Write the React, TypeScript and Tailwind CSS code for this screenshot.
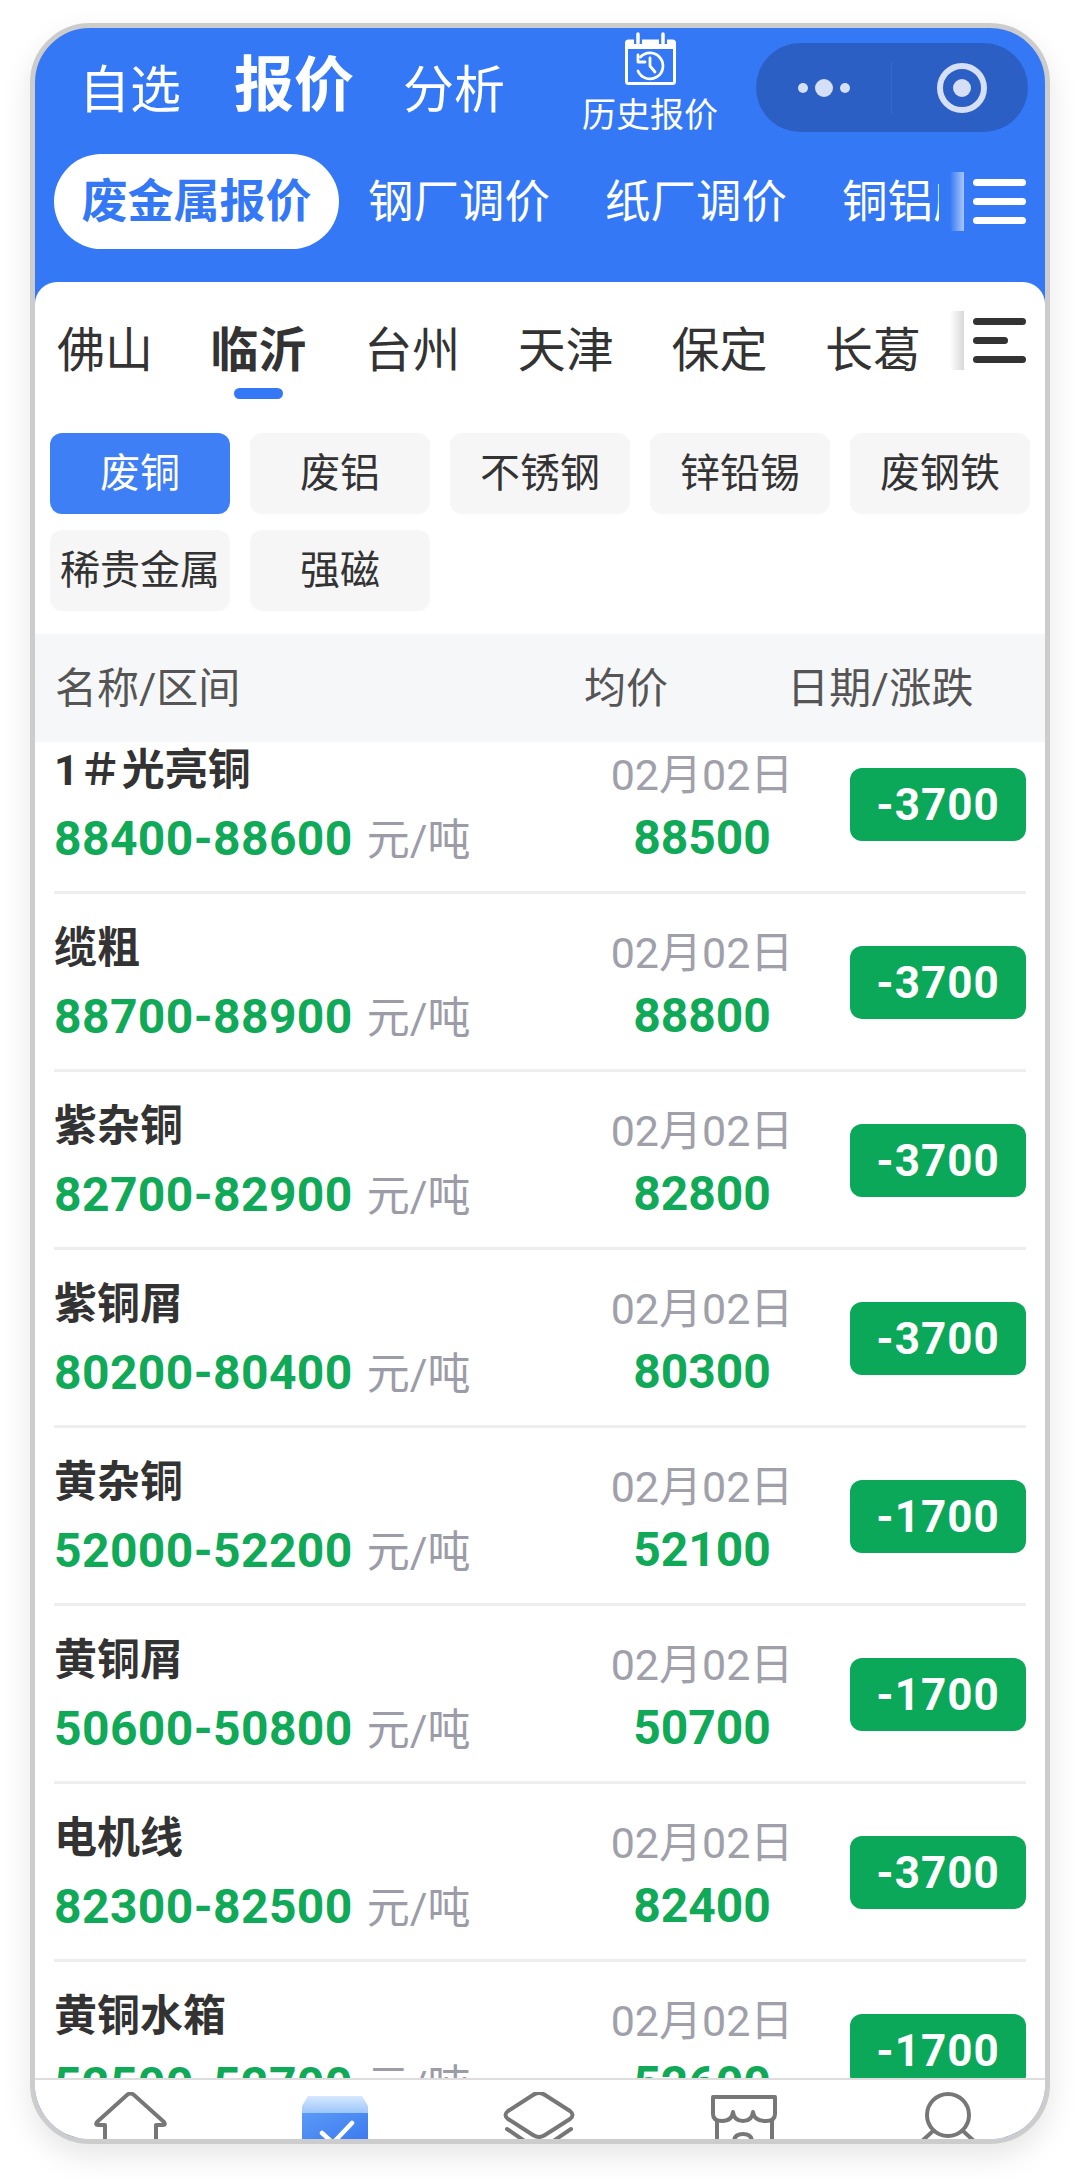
const subTabs = ["钢厂调价", "纸厂调价", "铜铝废料"];
const cities = ["佛山", "临沂", "台州", "天津", "保定", "长葛"];
const chips = ["废铜", "废铝", "不锈钢", "锌铅锡", "废钢铁", "稀贵金属", "强磁"];

const rows = [
  { name: "1＃光亮铜", range: "88400-88600", avg: "88500", change: "-3700" },
  { name: "缆粗", range: "88700-88900", avg: "88800", change: "-3700" },
  { name: "紫杂铜", range: "82700-82900", avg: "82800", change: "-3700" },
  { name: "紫铜屑", range: "80200-80400", avg: "80300", change: "-3700" },
  { name: "黄杂铜", range: "52000-52200", avg: "52100", change: "-1700" },
  { name: "黄铜屑", range: "50600-50800", avg: "50700", change: "-1700" },
  { name: "电机线", range: "82300-82500", avg: "82400", change: "-3700" },
  { name: "黄铜水箱", range: "52500-52700", avg: "52600", change: "-1700" },
];

function CalendarIcon() {
  return (
    <svg width="51" height="53" viewBox="0 0 51 53" fill="none">
      <rect x="1.5" y="9" width="48" height="42.5" rx="2" stroke="#fff" strokeWidth="3" />
      <rect x="1.5" y="9" width="48" height="8" fill="#fff" />
      <path d="M13 0v12M38 0v12" stroke="#3478f6" strokeWidth="8" />
      <path d="M13 2v9M38 2v9" stroke="#fff" strokeWidth="3.5" strokeLinecap="round" />
      <path d="M15.5 25A13 13 0 1 1 13 39" stroke="#fff" strokeWidth="2.8" strokeLinecap="round" />
      <path d="M13 23v7h7" stroke="#fff" strokeWidth="2.8" strokeLinecap="round" strokeLinejoin="round" />
      <path d="M25 26v8l5 6" stroke="#fff" strokeWidth="2.8" strokeLinecap="round" strokeLinejoin="round" />
    </svg>
  );
}

function MenuIcon({ dark }: { dark?: boolean }) {
  const color = dark ? "bg-[#333]" : "bg-white";
  return (
    <div className="flex w-[53px] flex-col gap-[12px]">
      <div className={`h-[7px] w-full rounded-full ${color}`} />
      <div className={`h-[7px] rounded-full ${color} ${dark ? "w-[35px]" : "w-full"}`} />
      <div className={`h-[7px] w-full rounded-full ${color}`} />
    </div>
  );
}

function NavIcons() {
  const stroke = { stroke: "#777", strokeWidth: 4, fill: "none", strokeLinejoin: "round" as const, strokeLinecap: "round" as const };
  return (
    <div className="flex justify-between pl-[55px] pr-[57px] pt-[12px]">
      <svg width="80" height="47" viewBox="0 0 80 47">
        <path d="M15 50V33H8Q5 33 7 30L37 3Q40 0 44 3L74 30Q76 33 73 33H66V50" {...stroke} />
      </svg>
      <svg width="80" height="47" viewBox="0 0 80 47">
        <defs>
          <linearGradient id="boxTop" x1="0" y1="0" x2="0" y2="1">
            <stop offset="0" stopColor="#d6e8fe" />
            <stop offset="1" stopColor="#9cc6fb" />
          </linearGradient>
          <linearGradient id="boxBody" x1="0" y1="0" x2="1" y2="1">
            <stop offset="0" stopColor="#5a9bf7" />
            <stop offset="1" stopColor="#3a78ef" />
          </linearGradient>
        </defs>
        <path d="M13 4H67L73 14V21H7V14Z" fill="url(#boxTop)" />
        <rect x="7" y="21" width="66" height="30" fill="url(#boxBody)" />
        <path d="M27 41L38 51L57 31" stroke="#fff" strokeWidth="4.5" strokeLinecap="round" fill="none" />
      </svg>
      <svg width="80" height="47" viewBox="0 0 80 47">
        <path d="M34 3Q40-1 46 3L71 19Q76 23 71 27L46 43Q40 47 34 43L9 27Q4 23 9 19Z" {...stroke} />
        <path d="M8 37L30 52M72 37L50 52" {...stroke} />
      </svg>
      <svg width="80" height="47" viewBox="0 0 80 47">
        <path d="M9 5H71V22Q71 29 62 29Q50 29 49 20Q48 29 39 29Q30 29 29 20Q28 29 18 29Q9 29 9 22Z" {...stroke} />
        <path d="M13 29V50M68 29V50" {...stroke} />
        <path d="M30 50Q30 42 39 42Q48 42 48 50" {...stroke} />
      </svg>
      <svg width="80" height="47" viewBox="0 0 80 47">
        <circle cx="40" cy="23" r="21" {...stroke} />
        <path d="M25 39L14 49M55 39L66 49" {...stroke} />
      </svg>
    </div>
  );
}

export default function App() {
  return (
    <div
      className="h-[2179px] w-[1080px] overflow-hidden bg-white pl-[30px] pt-[23px]"
      style={{ fontFamily: 'Roboto, "Noto Sans CJK SC", sans-serif' }}
    >
      <div className="flex h-[2121px] w-[1020px] flex-col overflow-hidden rounded-[60px] border-[5px] border-[#cccccc] bg-[#3478f6] shadow-[0_12px_30px_rgba(0,0,0,0.1)]">
        {/* Blue header */}
        <div className="h-[254px] shrink-0">
          <div className="flex h-[112px] items-start pl-[44px] pr-[17px] text-white">
            <span className="mt-[35px] text-[51px] leading-[56px]">自选</span>
            <span className="ml-[53px] mt-[23px] text-[60px] font-bold leading-[70px]">报价</span>
            <span className="ml-[49px] mt-[35px] text-[51px] leading-[56px]">分析</span>
            <div className="ml-[77px] flex w-[136px] flex-col items-center pt-[4px]">
              <CalendarIcon />
              <span className="mt-[10px] whitespace-nowrap text-[34px] leading-[40px]">历史报价</span>
            </div>
            <div className="ml-auto mt-[15px] flex h-[89px] w-[272px] items-center rounded-full bg-[#2b5fc4]">
              <div className="flex h-[54px] w-[136px] items-center justify-center gap-[7px] border-r border-[#3368cc]">
                <div className="h-[10px] w-[10px] rounded-full bg-[#d5dff5]" />
                <div className="h-[18px] w-[18px] rounded-full bg-[#d5dff5]" />
                <div className="h-[10px] w-[10px] rounded-full bg-[#d5dff5]" />
              </div>
              <div className="flex flex-1 items-center justify-center pl-[4px]">
                <div className="flex h-[50px] w-[50px] items-center justify-center rounded-full border-[6px] border-[#d5dff5]">
                  <div className="h-[18px] w-[18px] rounded-full bg-[#d5dff5]" />
                </div>
              </div>
            </div>
          </div>
          <div className="mt-[14px] flex h-[95px] items-center pl-[19px] pr-[19px]">
            <div className="flex w-[885px] items-center gap-[55px] overflow-hidden">
              <div className="mr-[-26px] flex h-[95px] w-[285px] shrink-0 items-center justify-center rounded-full bg-white text-[46px] font-bold text-[#3478f6]">
                废金属报价
              </div>
              {subTabs.map((t) => (
                <span key={t} className="mt-[2px] shrink-0 whitespace-nowrap text-[45.5px] leading-[56px] text-white">
                  {t}
                </span>
              ))}
            </div>
            <div className="ml-[11px] h-[59px] w-[14px] shrink-0 bg-gradient-to-r from-[#3478f6] to-[#a9c5fa]" />
            <div className="ml-[9px]">
              <MenuIcon />
            </div>
          </div>
        </div>

        {/* White card */}
        <div className="flex min-h-0 flex-1 flex-col overflow-hidden rounded-t-[22px] bg-white">
          <div className="flex pl-[22px] pr-[19px] pt-[29px]">
            <div className="flex w-[893px] gap-[57.6px] overflow-hidden pt-[12px]">
              {cities.map((c) => (
                <div key={c} className="flex w-[96px] shrink-0 flex-col items-center">
                  <span className={`text-[48px] leading-[56px] text-[#333] ${c === "临沂" ? "font-bold" : ""}`}>{c}</span>
                  <div className={`mt-[9px] h-[11px] w-[49px] rounded-full ${c === "临沂" ? "bg-[#3478f6]" : ""}`} />
                </div>
              ))}
            </div>
            <div className="h-[59px] w-[14px] shrink-0 bg-gradient-to-r from-white to-[#d8d8d8]" />
            <div className="ml-[9px] pt-[7px]">
              <MenuIcon dark />
            </div>
          </div>

          <div className="ml-[15px] mr-[15px] mt-[34px] grid grid-cols-5 gap-x-[20px] gap-y-[16px]">
            {chips.map((c) => (
              <div
                key={c}
                className={`flex h-[81px] items-center justify-center rounded-[12px] text-[40px] ${c === "废铜" ? "bg-[#3f7ff5] text-white" : "bg-[#f6f6f7] text-[#333]"}`}
              >
                {c}
              </div>
            ))}
          </div>

          <div className="mt-[23px] flex h-[108px] shrink-0 items-center bg-[#f6f7f9] text-[42px] text-[#555]">
            <span className="ml-[20px] w-[529px]">名称/区间</span>
            <span className="w-[203px]">均价</span>
            <span className="tracking-[0.3px]">日期/涨跌</span>
          </div>

          <div className="min-h-0 flex-1 overflow-hidden">
            <div className="mt-[-26px]">
              {rows.map((r) => (
                <div key={r.name} className="ml-[19px] mr-[19px] flex h-[178px] items-start border-b-[3px] border-[#eeeeee]">
                  <div className="w-[548px] pt-[26px]">
                    <div className="text-[43px] font-bold leading-[56px] text-[#333]">{r.name}</div>
                    <div className="mt-[13px] flex items-baseline leading-[56px]">
                      <span className="text-[48px] font-bold tracking-[0.4px] text-[#0fa958]">{r.range}</span>
                      <span className="ml-[14px] text-[43px] text-[#9c9ca8]">元/吨</span>
                    </div>
                  </div>
                  <div className="flex w-[200px] flex-col items-center pt-[31px]">
                    <div className="whitespace-nowrap text-[43px] leading-[56px] text-[#a0a0ab]">02月02日</div>
                    <div className="mt-[7px] text-[48px] font-bold leading-[56px] text-[#0fa958]">{r.avg}</div>
                  </div>
                  <div className="ml-auto mt-[52px] flex h-[73px] w-[176px] items-center justify-center rounded-[12px] bg-[#0aa858] text-[44px] font-bold tracking-[1px] text-white">
                    {r.change}
                  </div>
                </div>
              ))}
            </div>
          </div>

          {/* Bottom nav, cut off by the frame */}
          <div className="h-[61px] shrink-0 overflow-hidden border-t-2 border-[#dddddd] bg-white">
            <NavIcons />
          </div>
        </div>
      </div>
    </div>
  );
}
